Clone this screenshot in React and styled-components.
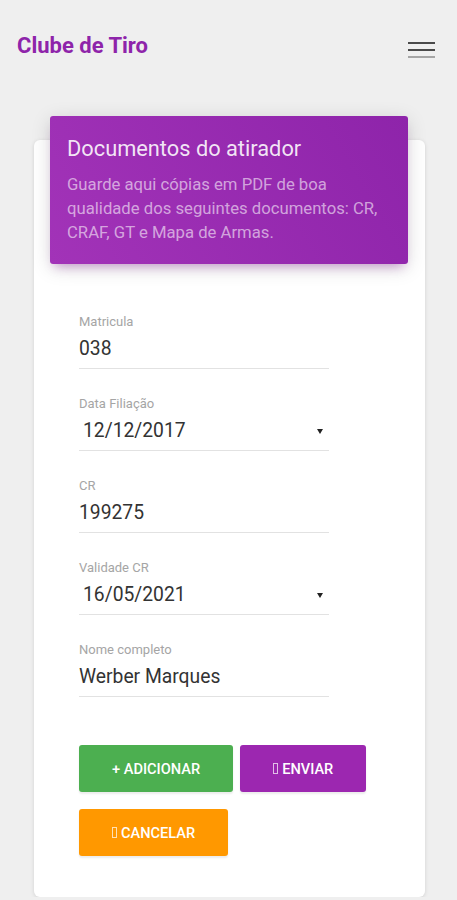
import React from "react";
import styled, { createGlobalStyle } from "styled-components";

const GlobalStyle = createGlobalStyle`
  body {
    margin: 0;
    background: #efefef;
    font-family: Roboto, "Noto Sans", "Liberation Sans", sans-serif;
  }
`;

const fields = [
  { label: "Matricula", value: "038" },
  { label: "Data Filiação", value: "12/12/2017", select: true },
  { label: "CR", value: "199275" },
  { label: "Validade CR", value: "16/05/2021", select: true },
  { label: "Nome completo", value: "Werber Marques" },
];

function App() {
  return (
    <>
      <GlobalStyle />
      <Page>
        <TopBar>
          <Brand>Clube de Tiro</Brand>
          <Burger aria-label="menu">
            <span />
            <span />
            <span />
          </Burger>
        </TopBar>

        <Card>
          <CardHeader>
            <CardTitle>Documentos do atirador</CardTitle>
            <CardCategory>
              Guarde aqui cópias em PDF de boa qualidade dos seguintes
              documentos: CR, CRAF, GT e Mapa de Armas.
            </CardCategory>
          </CardHeader>

          <Form>
            {fields.map((f) => (
              <Field key={f.label}>
                <Label>{f.label}</Label>
                <Value $select={f.select}>
                  {f.value}
                  {f.select && <Caret />}
                </Value>
              </Field>
            ))}

            <Actions>
              <Button $color="#4caf50">+ Adicionar</Button>
              <Button $color="#9c27b0">
                <Tofu />
                Enviar
              </Button>
              <Button $color="#ff9800">
                <Tofu />
                Cancelar
              </Button>
            </Actions>
          </Form>
        </Card>
      </Page>
    </>
  );
}

export default App;

const Page = styled.div`
  width: 457px;
`;

const TopBar = styled.header`
  height: 90px;
  display: flex;
  align-items: center;
  justify-content: space-between;
  padding: 0 22px 0 17px;
`;

const Brand = styled.div`
  color: #8e24aa;
  font-size: 22px;
  font-weight: 700;
`;

const Burger = styled.div`
  display: flex;
  flex-direction: column;
  gap: 5px;
  width: 27px;
  margin-top: 10px;

  span {
    display: block;
    height: 2px;
    background: #4a4a4a;
  }

  span:last-child {
    background: #a5a5a5;
  }
`;

const Card = styled.section`
  margin: 50px 32px 0 34px;
  background: #fff;
  border-radius: 6px;
  box-shadow: 0 1px 4px rgba(0, 0, 0, 0.12);
  padding-bottom: 41px;
`;

const CardHeader = styled.div`
  position: relative;
  top: -24px;
  margin: 0 17px -24px 16px;
  padding: 19px 17px 19px 17px;
  border-radius: 3px;
  background: linear-gradient(60deg, #a233b8, #8e24aa);
  box-shadow: 0 4px 20px rgba(0, 0, 0, 0.14),
    0 7px 10px -5px rgba(156, 39, 176, 0.4);
`;

const CardTitle = styled.h4`
  margin: 0 0 10px;
  font-size: 21.8px;
  font-weight: 400;
  line-height: 28px;
  color: rgba(255, 255, 255, 0.88);
`;

const CardCategory = styled.p`
  margin: 0;
  font-size: 16.7px;
  line-height: 24px;
  color: rgba(255, 255, 255, 0.58);
`;

const Form = styled.div`
  padding: 50px 0 0 45px;
`;

const Field = styled.div`
  width: 250px;
  margin-bottom: 27px;
  padding-bottom: 7px;
  border-bottom: 1px solid #e2e2e2;
`;

const Label = styled.div`
  font-size: 13px;
  line-height: 15px;
  color: #a5a5a5;
  margin-bottom: 8px;
`;

const Value = styled.div`
  display: flex;
  align-items: center;
  justify-content: space-between;
  font-size: 19.3px;
  line-height: 24px;
  color: #333;
  padding: ${(p) => (p.$select ? "0 6px 0 4px" : "0")};
`;

const Caret = styled.span`
  width: 0;
  height: 0;
  border-left: 3px solid transparent;
  border-right: 3px solid transparent;
  border-top: 5px solid #222;
`;

const Actions = styled.div`
  display: flex;
  flex-wrap: wrap;
  gap: 17px 7px;
  width: 300px;
  margin-top: 48px;
`;

const Button = styled.button`
  display: inline-flex;
  align-items: center;
  justify-content: center;
  height: 47px;
  padding: 0 33px;
  border: none;
  border-radius: 3px;
  background: ${(p) => p.$color};
  color: #fff;
  font-family: Roboto, "Liberation Sans", sans-serif;
  font-size: 14.6px;
  font-weight: 500;
  text-transform: uppercase;
  box-shadow: 0 2px 2px rgba(0, 0, 0, 0.08);
`;

const Tofu = styled.span`
  display: inline-block;
  width: 3px;
  height: 9px;
  margin-right: 4px;
  border: 1px solid rgba(255, 255, 255, 0.7);
`;
